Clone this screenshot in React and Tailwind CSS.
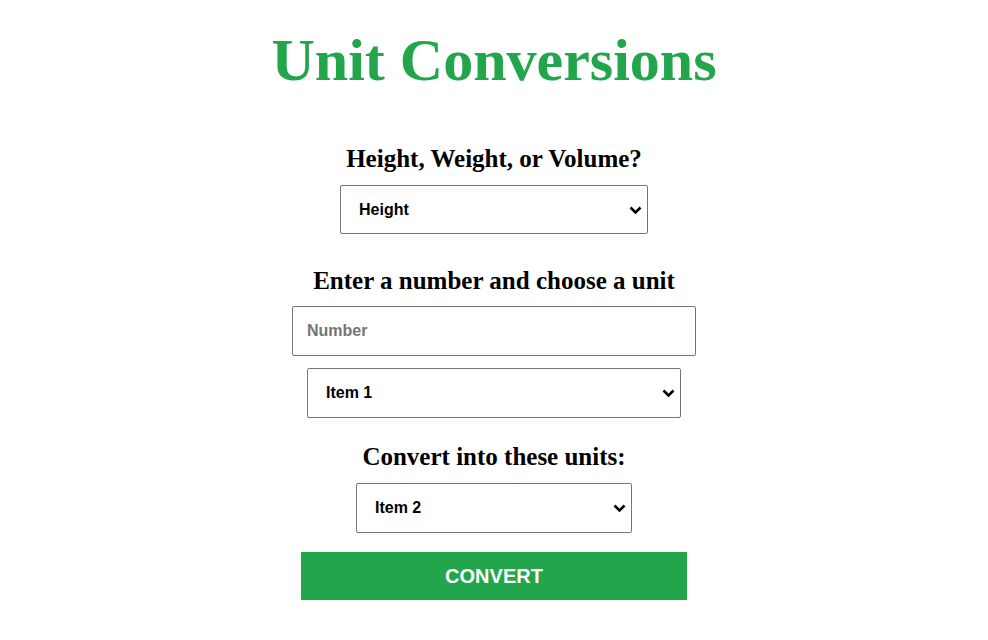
function Chevron() {
  return (
    <svg
      className="pointer-events-none absolute right-[6px] top-1/2 -translate-y-1/2"
      width="13"
      height="9"
      viewBox="0 0 13 9"
      fill="none"
    >
      <path d="M1.5 2 L6.5 7 L11.5 2" stroke="#000" strokeWidth="2.6" />
    </svg>
  );
}

function Select({ size, options, className = "" }) {
  return (
    <div className={`relative flex ${className}`}>
      <select
        className={`${size} appearance-none border border-[#767676] rounded-[2px] pl-[18px] pr-8 text-[16px] font-bold text-black bg-white`}
      >
        {options.map((o) => (
          <option key={o}>{o}</option>
        ))}
      </select>
      <Chevron />
    </div>
  );
}

const serif = "font-['Liberation_Serif','Times_New_Roman',serif]";

export default function App() {
  return (
    <div className="min-h-screen bg-white flex flex-col items-center font-['Liberation_Sans',Arial,sans-serif]">
      <h1 className={`mt-[20px] text-[60px] leading-[80px] font-bold text-[#22a54b] ${serif}`}>
        Unit Conversions
      </h1>

      <h2 className={`mt-[44px] text-[25px] leading-[29px] font-bold text-black ${serif}`}>
        Height, Weight, or Volume?
      </h2>
      <Select className="mt-[12px]" size="w-[308px] h-[49px]" options={["Height", "Weight", "Volume"]} />

      <h2 className={`mt-[32px] text-[25px] leading-[29px] font-bold text-black ${serif}`}>
        Enter a number and choose a unit
      </h2>
      <input
        type="text"
        placeholder="Number"
        className="mt-[11px] w-[404px] h-[50px] border border-[#767676] rounded-[2px] px-[14px] text-[16px] font-bold text-black placeholder:text-[#757575]"
      />
      <Select className="mt-[12px]" size="w-[374px] h-[50px]" options={["Item 1"]} />

      <h2 className={`mt-[24px] text-[25px] leading-[29px] font-bold text-black ${serif}`}>
        Convert into these units:
      </h2>
      <Select className="mt-[12px]" size="w-[276px] h-[50px]" options={["Item 2"]} />

      <button className="mt-[19px] w-[386px] h-[48px] bg-[#22a54b] text-white text-[20px] font-bold uppercase">
        Convert
      </button>
    </div>
  );
}
